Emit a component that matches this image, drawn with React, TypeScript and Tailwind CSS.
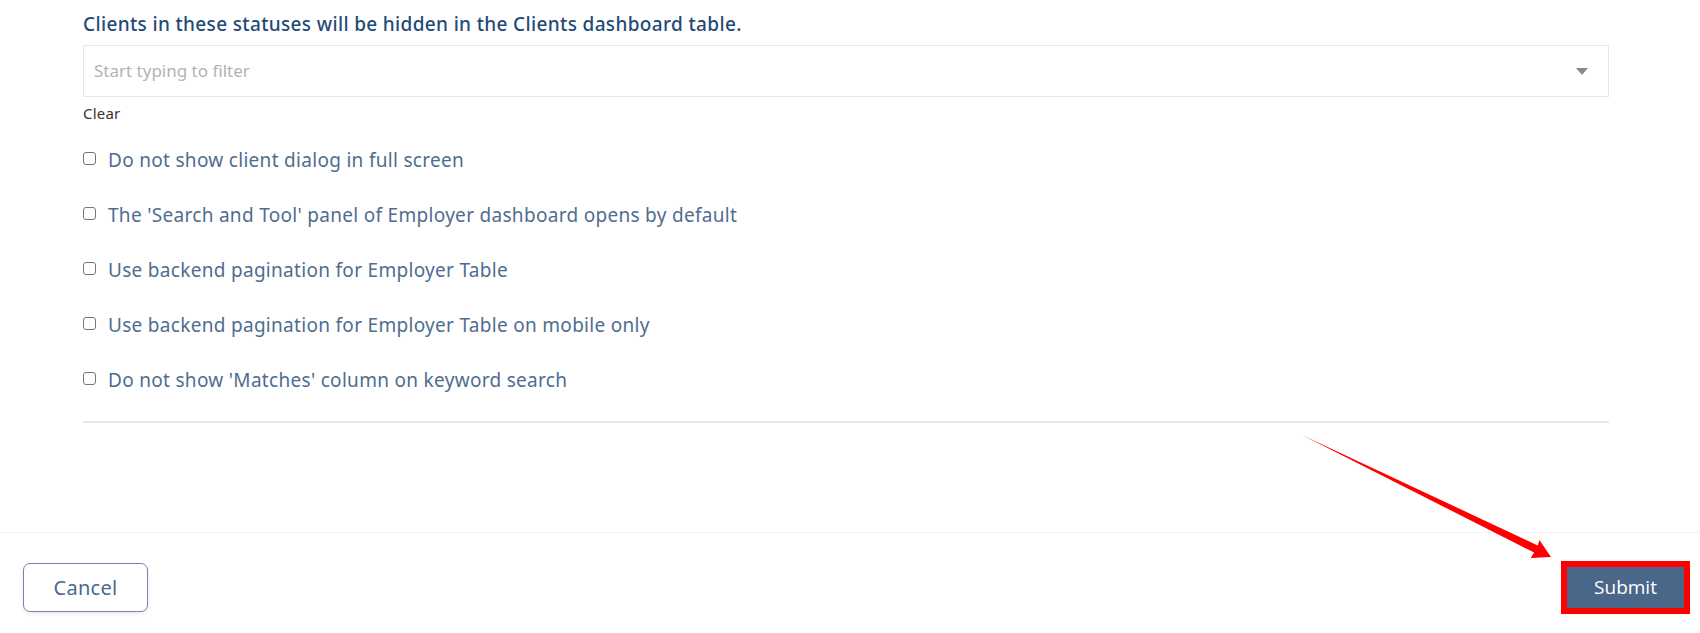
import React from "react";

const items = [
  "Do not show client dialog in full screen",
  "The 'Search and Tool' panel of Employer dashboard opens by default",
  "Use backend pagination for Employer Table",
  "Use backend pagination for Employer Table on mobile only",
  "Do not show 'Matches' column on keyword search",
];

export default function App() {
  return (
    <div
      className="relative w-[1700px] h-[633px] bg-white flex flex-col overflow-hidden"
      style={{ fontFamily: "'Noto Sans', sans-serif" }}
    >
      <div className="pl-[83px] pr-[91px] pt-[12px] h-[532px]">
        <div className="text-[19px] leading-[24px] font-medium tracking-[0.35px] text-[#1f4b76]">
          Clients in these statuses will be hidden in the Clients dashboard table.
        </div>
        <div className="mt-[9px] h-[52px] border border-[#e6e6e6] flex items-center pl-[10px] pr-[20px]">
          <span className="flex-1 text-[17px] text-[#b3b3b3]">Start typing to filter</span>
          <svg width="12" height="7" viewBox="0 0 12 7">
            <path d="M0 0 L12 0 L6 7 Z" fill="#8a8a8a" />
          </svg>
        </div>
        <div className="mt-[7px] text-[15px] leading-[18px] tracking-[0.2px] text-[#333]">Clear</div>
        <div className="mt-[11px] flex flex-col">
          {items.map((t) => (
            <div key={t} className="h-[55px] flex items-center">
              <span className="w-[13px] h-[13px] border border-[#767676] rounded-[3px] mr-[12px] mt-[-4px]" />
              <span className="text-[19px] tracking-[0.3px] text-[#4f6d8f]">{t}</span>
            </div>
          ))}
        </div>
        <div className="mt-[13px] h-[2px] bg-[#e8e8e8]" />
      </div>
      <div className="flex-1 border-t border-[#f2f2f2] flex items-start justify-between pl-[23px] pr-[10px] pt-[28px]">
        <button className="mt-[2px] w-[125px] h-[49px] border border-[#6f88a6] rounded-[7px] text-[20px] tracking-[0.3px] text-[#4a6a8e] shadow-[0_2px_4px_rgba(0,0,0,0.08)] bg-white">
          Cancel
        </button>
        <div className="border-[6px] border-[#ff0000] bg-white">
          <div className="w-[117px] h-[41px] bg-[#4a6688] flex items-center justify-center text-white text-[19px]" style={{ fontFamily: "'Open Sans', sans-serif" }}>
            Submit
          </div>
        </div>
      </div>
      <svg className="absolute left-0 top-0 pointer-events-none" width="1700" height="633">
        <polygon points="1302,435 1537.8,545.4 1539.4,540 1551,557 1530.6,558 1534.2,552.6" fill="#ff0000" />
      </svg>
    </div>
  );
}
